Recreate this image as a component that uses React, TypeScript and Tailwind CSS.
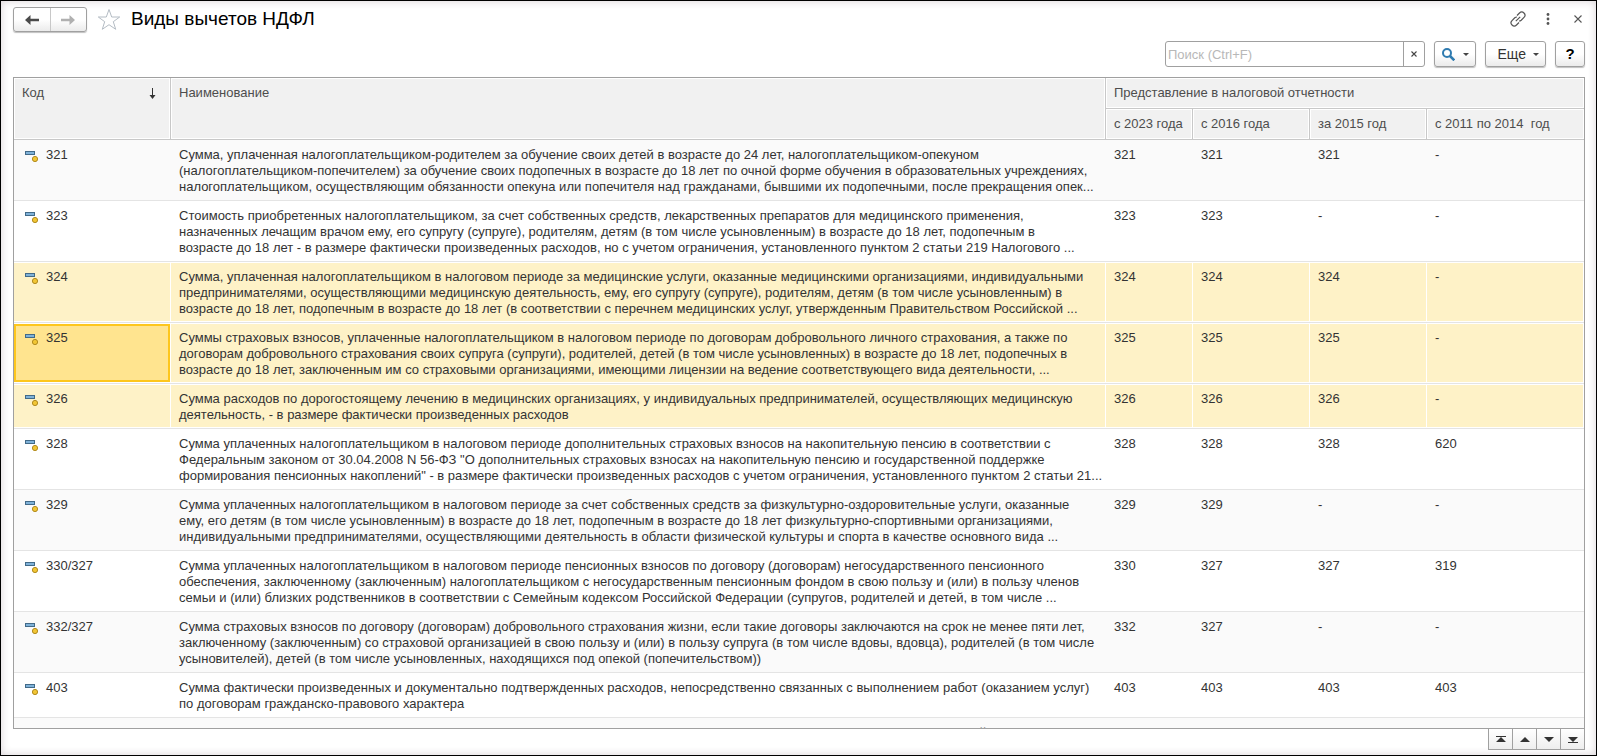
import React from "react";

type Row = {
  code: string;
  lines: string[];
  values: [string, string, string, string];
  state?: "selected" | "current";
};

const rows: Row[] = [
  {
    code: "321",
    lines: [
      "Сумма, уплаченная налогоплательщиком-родителем за обучение своих детей в возрасте до 24 лет, налогоплательщиком-опекуном",
      "(налогоплательщиком-попечителем) за обучение своих подопечных в возрасте до 18 лет по очной форме обучения в образовательных учреждениях,",
      "налогоплательщиком, осуществляющим обязанности опекуна или попечителя над гражданами, бывшими их подопечными, после прекращения опек...",
    ],
    values: ["321", "321", "321", "-"],
  },
  {
    code: "323",
    lines: [
      "Стоимость приобретенных налогоплательщиком, за счет собственных средств, лекарственных препаратов для медицинского применения,",
      "назначенных лечащим врачом ему, его супругу (супруге), родителям, детям (в том числе усыновленным) в возрасте до 18 лет, подопечным в",
      "возрасте до 18 лет - в размере фактически произведенных расходов, но с учетом ограничения, установленного пунктом 2 статьи 219 Налогового ...",
    ],
    values: ["323", "323", "-", "-"],
  },
  {
    code: "324",
    lines: [
      "Сумма, уплаченная налогоплательщиком в налоговом периоде за медицинские услуги, оказанные медицинскими организациями, индивидуальными",
      "предпринимателями, осуществляющими медицинскую деятельность, ему, его супругу (супруге), родителям, детям (в том числе усыновленным) в",
      "возрасте до 18 лет, подопечным в возрасте до 18 лет (в соответствии с перечнем медицинских услуг, утвержденным Правительством Российской ...",
    ],
    values: ["324", "324", "324", "-"],
    state: "selected",
  },
  {
    code: "325",
    lines: [
      "Суммы страховых взносов, уплаченные налогоплательщиком в налоговом периоде по договорам добровольного личного страхования, а также по",
      "договорам добровольного страхования своих супруга (супруги), родителей, детей (в том числе усыновленных) в возрасте до 18 лет, подопечных в",
      "возрасте до 18 лет, заключенным им со страховыми организациями, имеющими лицензии на ведение соответствующего вида деятельности, ...",
    ],
    values: ["325", "325", "325", "-"],
    state: "current",
  },
  {
    code: "326",
    lines: [
      "Сумма расходов по дорогостоящему лечению в медицинских организациях, у индивидуальных предпринимателей, осуществляющих медицинскую",
      "деятельность, - в размере фактически произведенных расходов",
    ],
    values: ["326", "326", "326", "-"],
    state: "selected",
  },
  {
    code: "328",
    lines: [
      "Сумма уплаченных налогоплательщиком в налоговом периоде дополнительных страховых взносов на накопительную пенсию в соответствии с",
      "Федеральным законом от 30.04.2008 N 56-ФЗ \"О дополнительных страховых взносах на накопительную пенсию и государственной поддержке",
      "формирования пенсионных накоплений\" - в размере фактически произведенных расходов с учетом ограничения, установленного пунктом 2 статьи 21...",
    ],
    values: ["328", "328", "328", "620"],
  },
  {
    code: "329",
    lines: [
      "Сумма уплаченных налогоплательщиком в налоговом периоде за счет собственных средств за физкультурно-оздоровительные услуги, оказанные",
      "ему, его детям (в том числе усыновленным) в возрасте до 18 лет, подопечным в возрасте до 18 лет физкультурно-спортивными организациями,",
      "индивидуальными предпринимателями, осуществляющими деятельность в области физической культуры и спорта в качестве основного вида ...",
    ],
    values: ["329", "329", "-", "-"],
  },
  {
    code: "330/327",
    lines: [
      "Сумма уплаченных налогоплательщиком в налоговом периоде пенсионных взносов по договору (договорам) негосударственного пенсионного",
      "обеспечения, заключенному (заключенным) налогоплательщиком с негосударственным пенсионным фондом в свою пользу и (или) в пользу членов",
      "семьи и (или) близких родственников в соответствии с Семейным кодексом Российской Федерации (супругов, родителей и детей, в том числе ...",
    ],
    values: ["330", "327", "327", "319"],
  },
  {
    code: "332/327",
    lines: [
      "Сумма страховых взносов по договору (договорам) добровольного страхования жизни, если такие договоры заключаются на срок не менее пяти лет,",
      "заключенному (заключенным) со страховой организацией в свою пользу и (или) в пользу супруга (в том числе вдовы, вдовца), родителей (в том числе",
      "усыновителей), детей (в том числе усыновленных, находящихся под опекой (попечительством))",
    ],
    values: ["332", "327", "-", "-"],
  },
  {
    code: "403",
    lines: [
      "Сумма фактически произведенных и документально подтвержденных расходов, непосредственно связанных с выполнением работ (оказанием услуг)",
      "по договорам гражданско-правового характера",
    ],
    values: ["403", "403", "403", "403"],
  },
  {
    code: "404",
    lines: [
      "Сумма фактически произведенных и документально подтвержденных расходов, связанных с получением авторских вознаграждений, или",
    ],
    values: ["404", "404", "404", "404"],
  },
];

const raised =
  "border border-[#a0a0a0] rounded-[3px] bg-linear-to-b from-white from-50% to-[#ebebeb] shadow-[0_1px_1px_rgba(0,0,0,0.25)]";

function ItemIcon() {
  return (
    <svg className="mt-1 shrink-0" width="13" height="12" viewBox="0 0 13 12" aria-hidden="true">
      <rect x="0.5" y="0.5" width="9" height="3" fill="#7fb2d9" stroke="#426a88" />
      <circle cx="10" cy="8" r="2.6" fill="#f2c634" stroke="#b08a1e" />
    </svg>
  );
}

function Caret() {
  return (
    <svg width="6" height="3" viewBox="0 0 6 3" aria-hidden="true">
      <path d="M0 0h6L3 3z" fill="#444" />
    </svg>
  );
}

function HeaderCell({
  children,
  className = "",
  ...rest
}: React.ThHTMLAttributes<HTMLTableCellElement>) {
  return (
    <th
      {...rest}
      className={`border-b border-[#c8c8c8] bg-[#f1f1f1] px-2 pt-[7px] text-left align-top font-normal whitespace-pre shadow-[inset_0_0_0_1px_#fff] ${className}`}
    >
      {children}
    </th>
  );
}

function BodyRow({ row, index }: { row: Row; index: number }) {
  const marked = row.state !== undefined;
  const bg = marked ? "bg-[#fef2c7]" : index % 2 === 0 ? "bg-[#fafafa]" : "bg-white";
  const cell = `border-b border-[#e4e4e4] px-2 pt-[7px] pb-[5px] align-top ${bg} ${
    marked ? "shadow-[inset_-1px_1px_0_#fff,inset_0_-1px_0_#fff]" : ""
  }`;
  const codeCell =
    row.state === "current"
      ? "border-b border-[#e4e4e4] p-0 h-px bg-white"
      : `${cell} pl-[11px]`;
  const code = (
    <div className="flex gap-2">
      <ItemIcon />
      <span>{row.code}</span>
    </div>
  );
  return (
    <tr>
      <td className={codeCell}>
        {row.state === "current" ? (
          <div className="h-full py-px pr-px">
            <div className="h-full border-2 border-[#fdc61d] bg-[#ffe48f] pt-1 pl-[9px]">{code}</div>
          </div>
        ) : (
          code
        )}
      </td>
      <td className={cell}>
        {row.lines.map((line) => (
          <div key={line} className="whitespace-nowrap">
            {line}
          </div>
        ))}
      </td>
      {row.values.map((v, i) => (
        <td key={i} className={cell}>
          {v}
        </td>
      ))}
    </tr>
  );
}

const pagers = [
  { label: "В начало", d: "M0 0h10v1H0zM5 1L10 6H0z" },
  { label: "Вверх", d: "M5 1L10 6H0z" },
  { label: "Вниз", d: "M0 1h10L5 6z" },
  { label: "В конец", d: "M0 1h10L5 6zM0 6h10v1H0z" },
];

export default function App() {
  return (
    <div className="flex h-screen flex-col overflow-hidden border border-black bg-white pr-[11px] pb-[5px] pl-3 font-['Liberation_Sans',Arial,sans-serif] text-[13px] leading-4 text-[#333] shadow-[inset_0_0_8px_rgba(60,30,50,0.2)]">
      <header className="flex h-9 shrink-0 items-center">
        <nav className={`mt-px flex h-[25px] w-[74px] ${raised}`}>
          <button type="button" aria-label="Назад" className="flex flex-1 items-center justify-center border-r border-[#c8c8c8]">
            <svg width="14" height="10" viewBox="0 0 14 10" aria-hidden="true">
              <path d="M0 5L5.500 0V3.700H14V6.300H5.500V10z" fill="#4a4a4a" />
            </svg>
          </button>
          <button type="button" aria-label="Вперед" className="flex flex-1 items-center justify-center">
            <svg width="14" height="10" viewBox="0 0 14 10" aria-hidden="true">
              <path d="M14 5L8.500 0V3.700H0V6.300H8.500V10z" fill="#b0b0b0" />
            </svg>
          </button>
        </nav>
        <button type="button" aria-label="В избранное" className="ml-[10px]">
          <svg width="24" height="23" viewBox="0 0 24 23" aria-hidden="true">
            <path d="M12 1.500L14.700 9H22.700L16.300 13.700L18.700 21.300L12 16.700L5.300 21.300L7.700 13.700L1.300 9H9.300z" fill="none" stroke="#b4bcc4" />
          </svg>
        </button>
        <h1 className="ml-[10px] text-[19px] leading-6 text-black">Виды вычетов НДФЛ</h1>
        <div className="ml-auto flex items-center">
          <button type="button" aria-label="Ссылка">
            <svg width="16" height="16" viewBox="0 0 16 16" fill="none" stroke="#555" strokeWidth="1.200" aria-hidden="true">
              <path d="M7 4.500L9.500 2A3.100 3.100 0 0 1 14 6.400L11.200 9.200A3.100 3.100 0 0 1 9 10M9 11.500L6.500 14A3.100 3.100 0 0 1 2 9.600L4.800 6.800A3.100 3.100 0 0 1 7 6M5.800 10.200L10.200 5.800" />
            </svg>
          </button>
          <button type="button" aria-label="Меню" className="ml-5">
            <svg width="4" height="12" viewBox="0 0 4 12" fill="#555" aria-hidden="true">
              <circle cx="2" cy="1.500" r="1.400" />
              <circle cx="2" cy="6" r="1.400" />
              <circle cx="2" cy="10.500" r="1.400" />
            </svg>
          </button>
          <button type="button" aria-label="Закрыть" className="mr-[3px] ml-6">
            <svg width="8" height="8" viewBox="0 0 8 8" stroke="#555" strokeWidth="1.100" aria-hidden="true">
              <path d="M0.500 0.500L7.500 7.500M7.500 0.500L0.500 7.500" />
            </svg>
          </button>
        </div>
      </header>

      <div className="mt-1 flex h-[26px] shrink-0 justify-end">
        <div className="flex w-[260px] rounded-[3px] border border-[#a0a0a0] bg-white">
          <input
            type="text"
            aria-label="Поиск"
            placeholder="Поиск (Ctrl+F)"
            className="min-w-0 flex-1 px-[2px] pt-px outline-none placeholder:text-[#b8b8b8]"
          />
          <button type="button" aria-label="Очистить" className="flex w-[21px] items-center justify-center border-l border-[#a0a0a0]">
            <svg width="6" height="6" viewBox="0 0 6 6" stroke="#444" strokeWidth="1.100" aria-hidden="true">
              <path d="M0.500 0.500L5.500 5.500M5.500 0.500L0.500 5.500" />
            </svg>
          </button>
        </div>
        <button type="button" aria-label="Найти" className={`ml-[9px] flex w-[42px] items-center justify-center gap-2 ${raised}`}>
          <svg width="13" height="13" viewBox="0 0 13 13" fill="none" stroke="#2f7bb0" aria-hidden="true">
            <circle cx="5" cy="5" r="4" strokeWidth="2" />
            <path d="M8 8L12.300 12.300" strokeWidth="2.600" />
          </svg>
          <Caret />
        </button>
        <button type="button" className={`ml-[9px] flex w-[61px] items-center justify-end gap-[7px] pr-[6px] text-[14px] ${raised}`}>
          Еще
          <Caret />
        </button>
        <button type="button" aria-label="Справка" className={`ml-[9px] w-[30px] text-[15px] font-bold text-black ${raised}`}>
          ?
        </button>
      </div>

      <main className="mt-[10px] min-h-0 flex-1 overflow-hidden border border-[#a0a0a0]">
        <table className="w-full table-fixed border-separate border-spacing-0">
          <colgroup>
            <col className="w-[157px]" />
            <col />
            <col className="w-[87px]" />
            <col className="w-[117px]" />
            <col className="w-[117px]" />
            <col className="w-[157px]" />
          </colgroup>
          <thead className="text-[#4d4d4d]">
            <tr className="h-[31px]">
              <HeaderCell rowSpan={2} className="border-r">
                <div className="flex items-center justify-between pr-[6px]">
                  Код
                  <svg width="7" height="11" viewBox="0 0 7 11" aria-hidden="true">
                    <path d="M3 0h1v7h2.500L3.500 11L0.500 7H3z" fill="#333" />
                  </svg>
                </div>
              </HeaderCell>
              <HeaderCell rowSpan={2} className="border-r">Наименование</HeaderCell>
              <HeaderCell colSpan={4}>Представление в налоговой отчетности</HeaderCell>
            </tr>
            <tr className="h-[31px]">
              <HeaderCell className="border-r">с 2023 года</HeaderCell>
              <HeaderCell className="border-r">с 2016 года</HeaderCell>
              <HeaderCell className="border-r">за 2015 год</HeaderCell>
              <HeaderCell>{"с 2011 по 2014  год"}</HeaderCell>
            </tr>
          </thead>
          <tbody>
            {rows.map((row, i) => (
              <BodyRow key={row.code} row={row} index={i} />
            ))}
          </tbody>
        </table>
      </main>

      <footer className="flex h-[21px] shrink-0 justify-end">
        {pagers.map((p) => (
          <button
            key={p.label}
            type="button"
            aria-label={p.label}
            className="flex w-6 items-center justify-center border-b border-l border-[#a0a0a0] bg-linear-to-b from-white to-[#eee] last:w-[25px] last:border-r"
          >
            <svg width="10" height="7" viewBox="0 0 10 7" fill="#333" aria-hidden="true">
              <path d={p.d} />
            </svg>
          </button>
        ))}
      </footer>
    </div>
  );
}
